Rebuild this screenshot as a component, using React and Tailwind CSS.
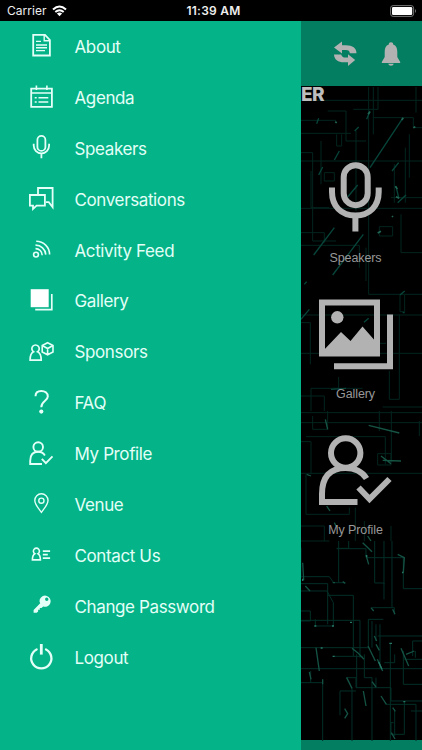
import React from "react";

const P = ({ d, w = 1.8, fill = "none" }) => (
  <path d={d} fill={fill} stroke={fill === "none" ? "currentColor" : "none"} strokeWidth={w} />
);

const items = [
  ["About", <>
    <P d="M7.2 3.8H19L23.9 9V24.5H7.2Z" />
    <P w={1.4} d="M18.2 4V9.7H23.5M10 10.4H15M10 14H21M10 16.8H21M10 19.6H19" />
  </>],
  ["Agenda", <>
    <P d="M5.2 6.7H25.9V24.9H5.2Z" />
    <P w={1.6} d="M5 11H26M10.4 3.5V8M20.9 3.5V8M12.5 15.8H22.3M12.5 20H22.3M8.7 15.8H10.7M8.7 20H10.7" />
  </>],
  ["Speakers", <>
    <rect x="11.4" y="2.9" width="8" height="15" rx="4" fill="none" stroke="currentColor" strokeWidth="1.8" />
    <P d="M7.7 10.8V12.5A7.7 8 0 0 0 23.1 12.5V10.8M15.4 20.5V25.2" />
  </>],
  ["Conversations", <>
    <P d="M12 10.5V4H26.6V23.2L22.8 18.2H20M3.9 11H18.9V21.6H10.6L7 25V21.6H3.9Z" />
  </>],
  ["Activity Feed", <>
    <circle cx="10" cy="19.6" r="2.4" fill="none" stroke="currentColor" strokeWidth="1.6" />
    <P w={1.6} d="M10.2 6.2A13.4 13.4 0 0 1 23.6 19.6M9.5 10.1A10.2 10.2 0 0 1 19.8 19.6M9.5 13.6A6.6 6.6 0 0 1 16.2 20.2" />
  </>],
  ["Gallery", <>
    <rect x="4.7" y="3.2" width="18" height="18" fill="#fff" />
    <P w={1.7} d="M25.8 8V23.7H9.2" />
  </>],
  ["Sponsors", <>
    <P w={1.7} d="M7.5 14.8A3.7 3.7 0 1 1 11.6 14.8Q15.2 16.4 15.2 23.1H4.1Q4.1 16.4 7.5 14.8Z" />
    <P w={1.6} d="M21.6 5.7L27 8.5V15L21.6 17.8L16.2 15V8.5ZM16.2 8.5L21.6 11.5L27 8.5M21.6 11.5V17.8" />
  </>],
  ["FAQ", <>
    <P w={2} d="M9.5 8.2C9.5 4.7 12.1 2.9 15.3 2.9C18.8 2.9 21.8 5 21.8 8.5C21.8 13 15.3 12.6 15.3 19.3" />
    <circle cx="15.3" cy="23.6" r="2.1" fill="currentColor" />
  </>],
  ["My Profile", <>
    <circle cx="12.2" cy="8" r="4.8" fill="none" stroke="currentColor" strokeWidth="1.9" />
    <P w={1.9} d="M16 25H4.2V21.8C4.2 16.3 7 12.8 12.2 12.8C15.3 12.8 17.4 14.1 18.9 16.4M15.8 19.8L19.9 24.1L26.5 17.4" />
  </>],
  ["Venue", <>
    <P w={1.4} d="M15.4 23.3C13 19.8 8.8 15.5 8.8 11.4A6.6 6.6 0 0 1 22 11.4C22 15.5 17.8 19.8 15.4 23.3Z" />
    <circle cx="15.4" cy="11.7" r="2.6" fill="none" stroke="currentColor" strokeWidth="1.4" />
  </>],
  ["Contact Us", <>
    <P w={1.6} d="M8.8 13.7A3 3 0 1 1 12 13.7Q14.4 15 14.4 19.9H6.4Q6.4 15 8.8 13.7Z" />
    <P w={1.6} d="M16.8 11.1H24.1M16.8 14.6H21.8M16.8 18.1H24.1" />
  </>],
  ["Change Password", <>
    <path fillRule="evenodd" fill="currentColor" d="M13.7 8.6A5.6 5.6 0 1 1 17.2 15.5L15.5 17.1H13.8V18.8H12.1V20.4L10.7 21.8H7.6V18.9L14.2 12.3Q13.1 10.6 13.7 8.6ZM20.7 6.6A1.7 1.7 0 1 0 20.8 10A1.7 1.7 0 0 0 20.7 6.6Z" />
  </>],
  ["Logout", <>
    <path fill="none" stroke="currentColor" strokeWidth="2.3" strokeLinecap="round" d="M10.6 7.4A10.1 10.1 0 1 0 20 7.4" />
    <path stroke="currentColor" strokeWidth="2.8" d="M15.3 2V12.6" />
  </>],
];

const Circuit = () => (
  <svg className="absolute inset-0" width="121" height="655" viewBox="301 85 121 655" fill="none">
    <g transform="translate(296 80) scale(.33333)">
      <path stroke="#03251f" strokeWidth="3" d="M218 18V600M232 18V160M246 18V85H172M15 58H378M15 157H165M120 118H15M122 160V195H137V160M232 110H352V140H378M15 240H378M15 382H378M15 215H50V480H120M75 180V310M85 275H115V300H85ZM180 150V390M295 365V250M328 200V365M340 160V290M285 350H378M250 437H290V465H250ZM315 400V515H378M15 493H190V560M210 500V600M95 90H150V180H210M15 455H85V485M360 18V95M45 270V380H100" />
      <path stroke="#07453a" strokeWidth="4" d="M320 112L222 260M115 440L53 522M202 460L110 582M308 245L288 270M185 312L155 348M130 210L115 237M222 90L212 115M68 112L62 128M80 258L68 282M188 138L176 150M330 342L305 365M300 315L308 350" />
      <path stroke="#226654" strokeWidth="5" d="M216 100L222 92M118 122L122 126M298 316L304 324M288 408L291 405M300 347L310 352M245 456L255 451M352 140L358 137M317 117L322 110" />
    </g>
    <g transform="translate(296 280) scale(.33333)">
      <path stroke="#03251f" strokeWidth="3" d="M218 0V40H378M15 102H378M15 217H378M310 100V355H280V270M312 42V92H326V42M15 125H43V250M128 288V322H45V390M15 345H85V390M200 322H110M250 187H270M260 378H378" />
      <path stroke="#07453a" strokeWidth="4" d="M40 85L15 115M218 112L204 124M312 42L326 30M105 325L150 322M25 10L32 2M320 95H326" />
    </g>
    <g transform="translate(296 410) scale(.33333)">
      <path stroke="#03251f" strokeWidth="3" d="M15 5H378M15 35H378M30 77H268V160M15 92H45V190M15 187H378M250 0V60M286 0V150M50 15V55H95V0M245 128V162H285V128ZM370 30V75M30 190V310H160V290M15 345H85V390M178 290V390M285 345V390M205 330V390M15 390H100" />
      <path stroke="#165444" strokeWidth="4" d="M218 43L310 66M255 135L285 158M88 25L95 55M260 148L315 150M32 190L45 195M92 285L102 300M115 335L120 345M215 375L225 390" />
    </g>
    <g transform="translate(296 540) scale(.33333)">
      <path stroke="#032f27" strokeWidth="3" d="M15 107H100L113 125H145M15 128H95V250M15 150H93L112 185V255H58V235M128 0V125M158 0V22H122M122 23H210V50H322V143H378M236 0V126H264V175M264 0V130M288 0V198M15 20V110M93 163H172V345M15 210H43V240H15M15 238H192V350M15 320H220M110 346H200M15 383H378M15 425H80V600M44 390V425M228 200H295V220M217 315V235H262M228 320V240M240 300V250M252 385V250M245 285H378M283 307V600M265 365H296V340M322 330V430H378M325 355H378M350 345V300H378M150 410H180V440H285V480H378M132 523V450H180M168 440V600M182 340V440M205 340V410H228V600M270 490H360V600M325 480V580H285V545H293M296 505V585M240 410V440M345 510H378M358 330V350" />
      <path stroke="#145244" strokeWidth="4" d="M200 5L228 32M210 42L218 70M305 40L325 50L322 95M20 65L23 118M28 135L42 150M110 125H117M140 122L148 127M168 322L185 335L204 355M216 315L238 360M240 310L250 328M244 355L260 390M315 322L338 375M152 410L168 442M202 450L210 495M255 465L271 490M228 422L240 438M290 500L298 511M146 503L155 518L146 532M286 575L297 594M60 320L70 390M40 393L45 415M235 285L242 300M225 200L233 210M290 205L297 220M80 415V430M330 340L355 330" />
      <path stroke="#277867" strokeWidth="4" d="M212 42V48M320 92V97M55 255H61M108 255H114M110 346H116M74 321H80M162 244H168M280 307H288M248 363L258 385M20 113V120M322 482H328" />
    </g>
  </svg>
);

const Tile = ({ label, children }) => (
  <div className="flex h-[136px] w-[108px] flex-col items-center">
    <svg className="shrink-0" width="90" height="90" viewBox="0 0 90 90" fill="none" stroke="#b2b2b2" strokeWidth="6">{children}</svg>
    <span className="mt-2 pl-px font-['Liberation_Sans',sans-serif] text-[12.5px] leading-4 tracking-[-0.1px] text-[#989898]">{label}</span>
  </div>
);

export default function App() {
  return (
    <div className="flex h-[750px] w-[422px] flex-col overflow-hidden bg-black font-['Inter',sans-serif]">
      <header className="grid h-[21px] shrink-0 grid-cols-3 items-center text-[12px] leading-none text-[#eee]">
        <div className="flex items-center gap-[5px] pl-[7px]">
          <span className="tracking-[0.05px]">Carrier</span>
          <svg width="15" height="12" viewBox="0 0 15 12" fill="none" stroke="#fff" strokeWidth="2">
            <path d="M1 4.4Q7.5-1.5 14 4.4M3.3 7.1Q7.5 3.5 11.7 7.1" />
            <path fill="#fff" stroke="none" d="M4.9 8.6Q7.5 6.5 10.1 8.6L7.5 11.2Z" />
          </svg>
        </div>
        <span className="pl-[5px] text-center text-[12px] font-semibold tracking-[0.25px]">11:39 AM</span>
        <div className="flex justify-end pr-[5px]">
          <svg width="27" height="12" viewBox="0 0 27 12">
            <rect x=".6" y=".6" width="23" height="10.8" rx="2.5" fill="none" stroke="#777" />
            <rect x="2" y="2" width="20.2" height="8" rx="1.2" fill="#fff" />
            <path d="M25 4Q27 6 25 8Z" fill="#777" />
          </svg>
        </div>
      </header>
      <div className="flex min-h-0 flex-1">
        <nav className="w-[301px] shrink-0 bg-[#04b388] text-[#e3fff7]">
          {items.map(([label, icon]) => (
            <div key={label} className="flex h-[50.9px] items-center pl-[26px]">
              <svg className="shrink-0" width="30" height="30" viewBox="0 0 30 30">{icon}</svg>
              <span className="ml-[18.5px] whitespace-nowrap pt-px text-[17px] leading-6 tracking-[-0.38px]">{label}</span>
            </div>
          ))}
        </nav>
        <main className="flex w-[121px] shrink-0 flex-col overflow-hidden">
          <div className="flex h-[65px] shrink-0 items-center gap-[23px] bg-[#037e60] pl-[32px]">
            <svg width="25" height="26" viewBox="0 0 25 26" fill="#b2b2b2">
              <path d="M1 6.6L9 0.5V4.2H13C19.5 4.2 23.5 7 23.5 12.3H16.8C16.8 10 15.5 8.9 13 8.9H9V12.4Z" />
              <path d="M22.2 19.1L15 13.3V16.6H12.5C10 16.6 8.7 15.5 8.2 13.5H1C1.2 18.5 5 21.3 11 21.3H15V25Z" />
            </svg>
            <svg width="20" height="26" viewBox="0 0 20 26" fill="#b2b2b2">
              <path d="M10 1.3C11.5 1.3 12.2 2.2 12.2 3.5C15.3 4.5 16.3 7.2 16.3 11V16L19.2 21.1V22H.8V21.1L3.7 16V11C3.7 7.2 4.7 4.5 7.8 3.5C7.8 2.2 8.5 1.3 10 1.3ZM7.2 22.7H12.8Q12.3 24.8 10 24.8T7.2 22.7Z" />
            </svg>
          </div>
          <div className="relative min-h-0 flex-1">
            <Circuit />
            <div className="relative">
              <div className="h-[65.5px] text-[19px] font-extrabold leading-[17px] tracking-[-0.5px] text-[#bdbdbd]">ER</div>
              <Tile label="Speakers">
                <rect x="33.7" y="13.2" width="24" height="40" rx="12" />
                <path d="M22 35.5V40C22 54 31 63.5 45.4 63.5S68.7 54 68.7 40V35.5M45.4 63V79.5" />
              </Tile>
              <Tile label="Gallery">
                <path d="M12 14.5H67V65.5H12ZM80 26.5V78.2H24" />
                <g fill="#b2b2b2" stroke="none">
                  <circle cx="27.3" cy="29.3" r="6.2" />
                  <path d="M12 64L31 44L40.5 53L52.5 38.5L67 55V68H12Z" />
                </g>
              </Tile>
              <Tile label="My Profile">
                <circle cx="35.7" cy="29" r="14.7" />
                <path d="M47.5 78H12V70C12 53 20 44 35.5 44C45 44 52 47.5 56.5 54.5M48.5 63.5L59.5 75L79.5 55" />
              </Tile>
            </div>
          </div>
          <div className="h-[10px] shrink-0 bg-[#037e60]" />
        </main>
      </div>
    </div>
  );
}
